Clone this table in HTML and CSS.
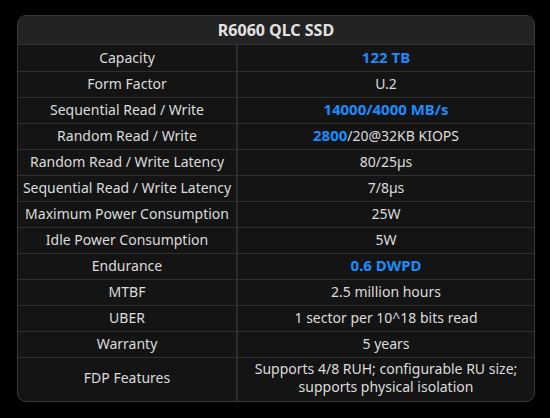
FILE: index.html
```html
<!DOCTYPE html>
<html>
<head>
<meta charset="utf-8">
<link rel="stylesheet" href="styles.css">
</head>
<body>
<div class="card">
  <div class="title">R6060 QLC SSD</div>
  <table class="specs">
    <tr><td class="k">Capacity</td><td class="v"><span class="hl">122 TB</span></td></tr>
    <tr><td class="k">Form Factor</td><td class="v">U.2</td></tr>
    <tr><td class="k">Sequential Read / Write</td><td class="v"><span class="hl">14000/4000 MB/s</span></td></tr>
    <tr><td class="k">Random Read / Write</td><td class="v"><span class="hl">2800</span>/20@32KB KIOPS</td></tr>
    <tr><td class="k">Random Read / Write Latency</td><td class="v">80/25µs</td></tr>
    <tr><td class="k">Sequential Read / Write Latency</td><td class="v">7/8µs</td></tr>
    <tr><td class="k">Maximum Power Consumption</td><td class="v">25W</td></tr>
    <tr><td class="k">Idle Power Consumption</td><td class="v">5W</td></tr>
    <tr><td class="k">Endurance</td><td class="v"><span class="hl">0.6 DWPD</span></td></tr>
    <tr><td class="k">MTBF</td><td class="v">2.5 million hours</td></tr>
    <tr><td class="k">UBER</td><td class="v">1 sector per 10^18 bits read</td></tr>
    <tr><td class="k">Warranty</td><td class="v">5 years</td></tr>
    <tr class="tall"><td class="k">FDP Features</td><td class="v">Supports 4/8 RUH; configurable RU size;<br>supports physical isolation</td></tr>
  </table>
</div>
</body>
</html>
```
FILE: styles.css
```css
html, body {
  margin: 0;
  padding: 0;
  background: #000;
}
body {
  padding: 15px 0 0 17px;
  font-family: "Noto Sans", "Liberation Sans", sans-serif;
  color: #dcdcdc;
}
.card {
  width: 516px;
  border: 1px solid #3a3a3a;
  border-radius: 9px;
  overflow: hidden;
  background: #141414;
}
.title {
  height: 28px;
  line-height: 28px;
  background: #232323;
  text-align: center;
  font-weight: 700;
  font-size: 16px;
  color: #e2e2e2;
  border-bottom: 1px solid #333;
}
.specs {
  width: 100%;
  border-collapse: collapse;
  table-layout: fixed;
}
.specs td {
  height: 26px;
  padding: 0 0 1px;
  box-sizing: border-box;
  text-align: center;
  font-size: 14px;
  line-height: 17px;
  border-top: 1px solid #2f2f2f;
}
.specs tr:first-child td {
  border-top: none;
}
.specs td.k {
  width: 219px;
  border-right: 2px solid #2f2f2f;
}
.specs tr.tall td {
  height: 44px;
  line-height: 18px;
  padding-bottom: 2px;
}
.hl {
  color: #1a8cff;
  font-weight: 700;
  font-size: 15px;
}
```
